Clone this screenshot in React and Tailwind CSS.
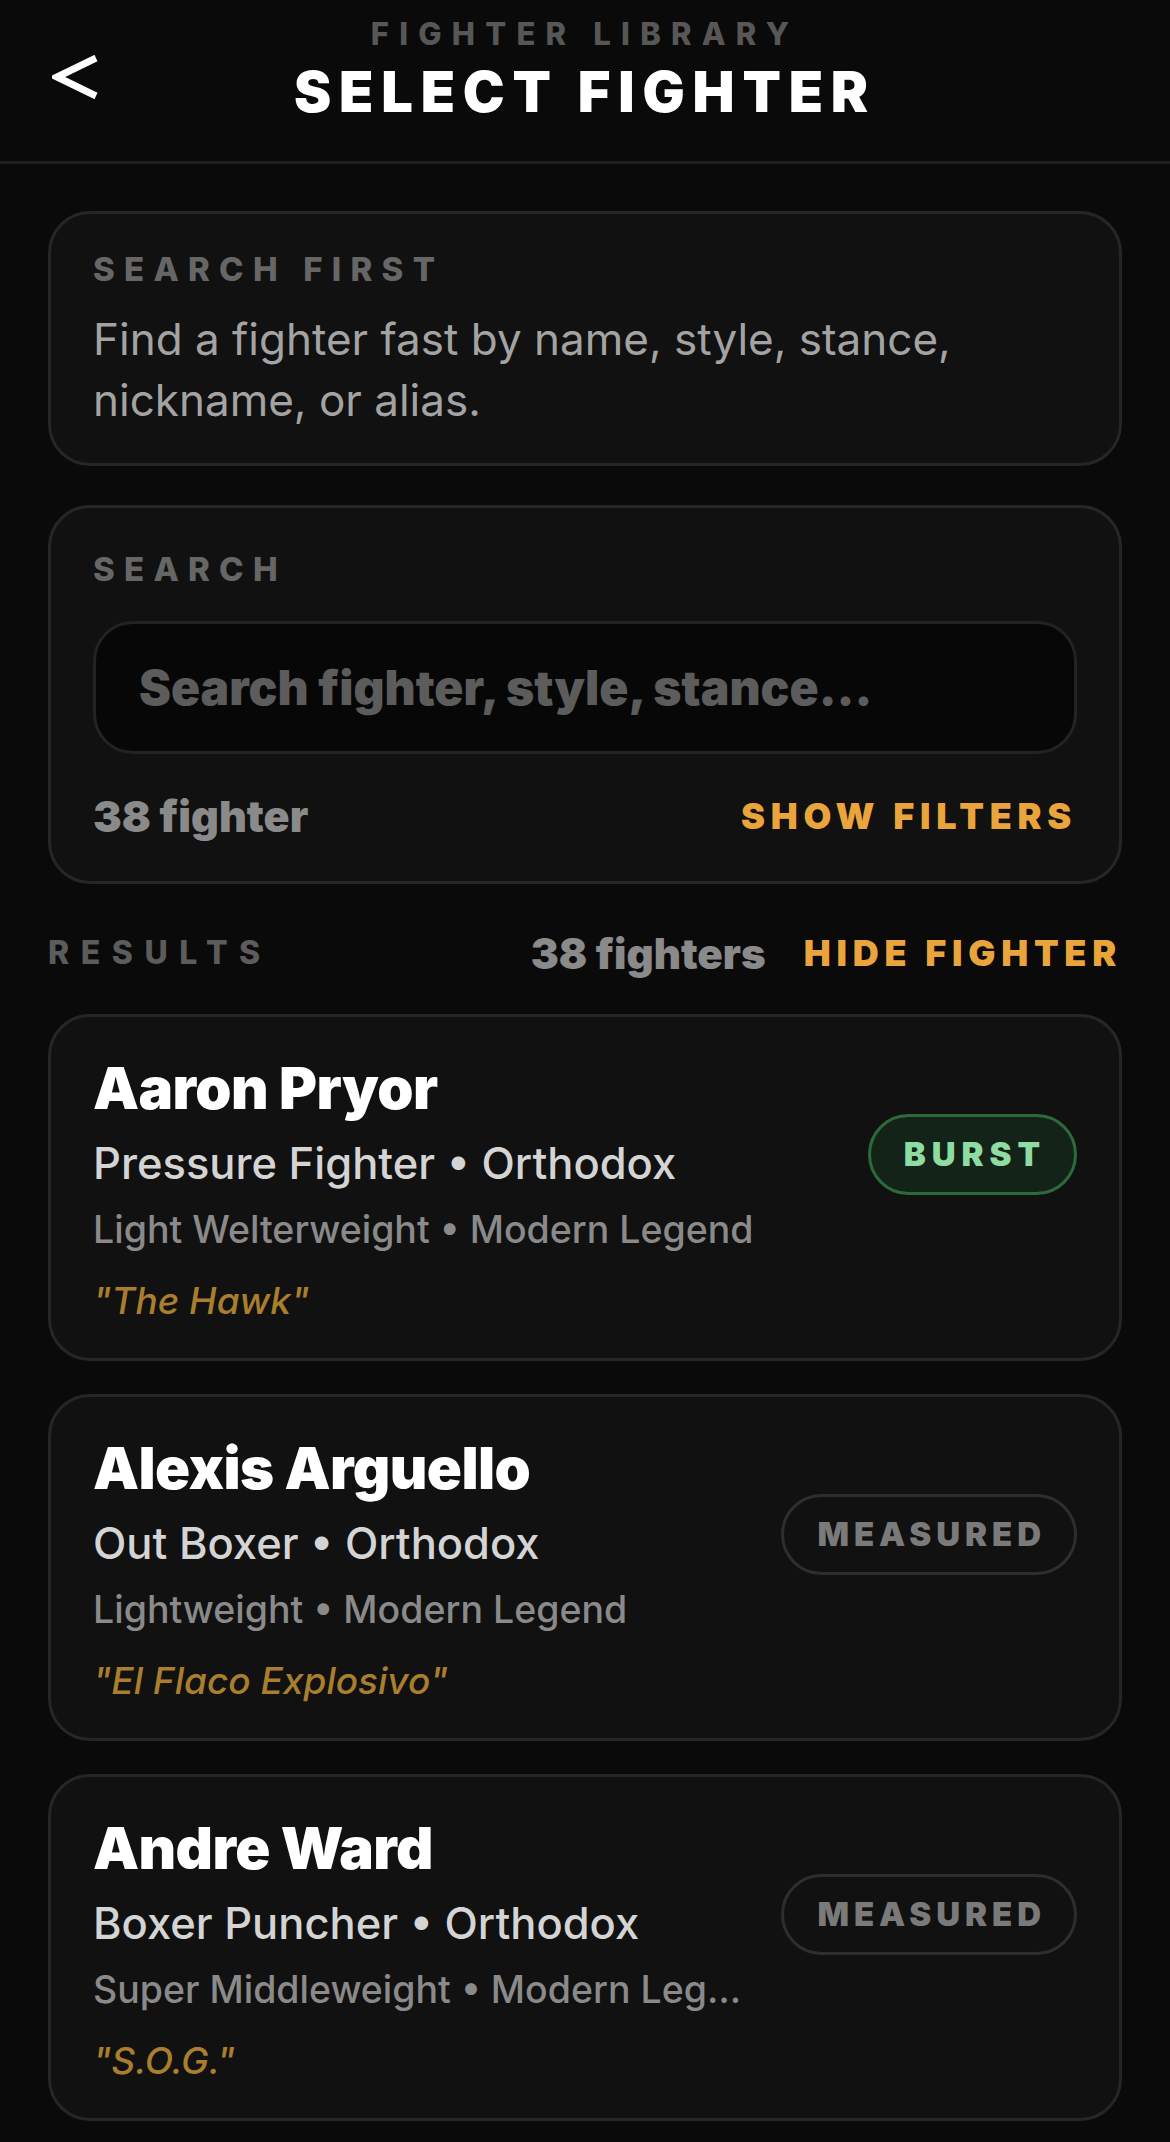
import React from "react";

const fighters = [
  {
    name: "Aaron Pryor",
    style: "Pressure Fighter • Orthodox",
    meta: "Light Welterweight • Modern Legend",
    nick: '"The Hawk"',
    badge: "BURST",
  },
  {
    name: "Alexis Arguello",
    style: "Out Boxer • Orthodox",
    meta: "Lightweight • Modern Legend",
    nick: '"El Flaco Explosivo"',
    badge: "MEASURED",
  },
  {
    name: "Andre Ward",
    style: "Boxer Puncher • Orthodox",
    meta: "Super Middleweight • Modern Legend",
    nick: '"S.O.G."',
    badge: "MEASURED",
  },
];

function Badge({ kind }) {
  if (kind === "BURST") {
    return (
      <div className="shrink-0 h-[81px] pl-[33px] pr-[28px] flex items-center rounded-full border-[3px] border-[#2d6a3b] bg-[#132318] text-[#8fdca2] text-[33px] font-black tracking-[0.18em] leading-none">
        BURST
      </div>
    );
  }
  return (
    <div className="shrink-0 h-[81px] pl-[33px] pr-[28px] flex items-center rounded-full border-[3px] border-[#2e2e2e] bg-[#111111] text-[#7a7a7a] text-[33px] font-black tracking-[0.15em] leading-none">
      {kind}
    </div>
  );
}

function FighterCard({ f }) {
  return (
    <div className="rounded-[42px] border-[3px] border-[#262626] bg-[#111111] pl-[42px] pr-[42px] pt-[38px] pb-[33px]">
      <div className="flex items-center gap-[40px]">
        <div className="flex-1 min-w-0">
          <div className="text-[58px] leading-[66px] font-black tracking-[-0.01em] text-white">
            {f.name}
          </div>
          <div className="mt-[15px] text-[43.5px] leading-[54px] font-medium text-[#d4d4d4] truncate">
            {f.style}
          </div>
          <div className="mt-[16px] text-[37.5px] leading-[48px] font-medium text-[#8a8a8a] truncate">
            {f.meta}
          </div>
        </div>
        <Badge kind={f.badge} />
      </div>
      <div className="mt-[23px] text-[37px] leading-[48px] font-medium italic text-[#a97e2d]">
        {f.nick}
      </div>
    </div>
  );
}

export default function App() {
  return (
    <div className="min-h-[2142px] bg-[#0a0a0a] text-white font-['Inter','Noto_Sans',sans-serif]">
      <header className="h-[164px] border-b-[3px] border-[#1f1f1f] grid grid-cols-[140px_1fr_140px]">
        <div className="pl-[52px] pt-[55px]">
          <svg width="48" height="44" viewBox="0 0 48 44" fill="none">
            <polyline
              points="44,3 5,22 44,41"
              stroke="white"
              strokeWidth="7"
              strokeLinecap="butt"
              strokeLinejoin="miter"
            />
          </svg>
        </div>
        <div className="flex flex-col items-center pt-[14px]">
          <div className="text-[31px] leading-[40px] font-extrabold tracking-[0.33em] text-[#575757]">
            FIGHTER LIBRARY
          </div>
          <div className="mt-[6px] text-[56px] leading-[64px] font-black tracking-[0.14em] text-white">
            SELECT FIGHTER
          </div>
        </div>
        <div />
      </header>

      <main className="px-[48px] pt-[47px] pb-[20px] flex flex-col">
        <section className="rounded-[42px] border-[3px] border-[#262626] bg-[#111111] px-[42px] pt-[35px] pb-[32px]">
          <div className="text-[33px] leading-[40px] font-extrabold tracking-[0.28em] text-[#666666]">
            SEARCH FIRST
          </div>
          <p className="mt-[20px] text-[44px] leading-[61px] text-[#a3a3a3]">
            Find a fighter fast by name, style, stance,
            <br />
            nickname, or alias.
          </p>
        </section>

        <section className="mt-[39px] rounded-[42px] border-[3px] border-[#262626] bg-[#111111] px-[42px] pt-[41px] pb-[41px]">
          <div className="text-[33px] leading-[40px] font-extrabold tracking-[0.28em] text-[#666666]">
            SEARCH
          </div>
          <div className="mt-[32px] h-[133px] rounded-[40px] border-[3px] border-[#232323] bg-[#070707] flex items-center px-[43px]">
            <span className="text-[48px] font-black text-[#5c5c5c]">
              Search fighter, style, stance...
            </span>
          </div>
          <div className="mt-[38px] h-[48px] flex items-center justify-between">
            <span className="text-[43px] font-black text-[#8a8a8a]">38 fighter</span>
            <span className="text-[36px] font-black tracking-[0.16em] text-[#eaa43c]">
              SHOW FILTERS
            </span>
          </div>
        </section>

        <div className="mt-[45px] h-[48px] flex items-center">
          <span className="text-[32px] font-extrabold tracking-[0.36em] text-[#5c5c5c]">
            RESULTS
          </span>
          <span className="ml-auto text-[42px] font-black text-[#8a8a8a]">
            38 fighters
          </span>
          <span className="ml-[38px] text-[36px] font-black tracking-[0.16em] text-[#eaa43c]">
            HIDE FIGHTER
          </span>
        </div>

        <div className="mt-[37px] flex flex-col gap-[33px]">
          {fighters.map((f) => (
            <FighterCard key={f.name} f={f} />
          ))}
        </div>
      </main>
    </div>
  );
}
